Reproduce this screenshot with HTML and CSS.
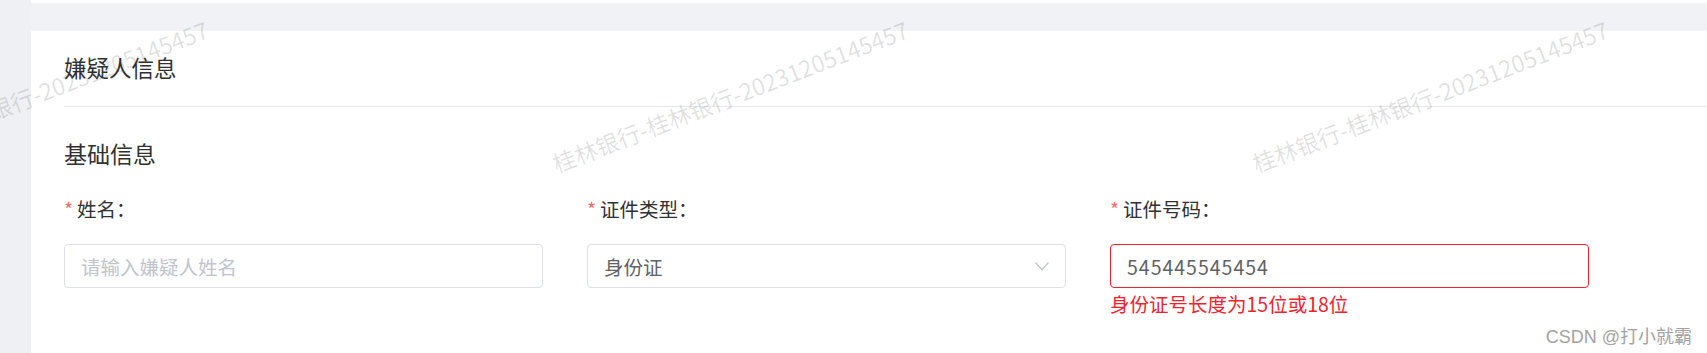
FILE: index.html
```html
<!DOCTYPE html>
<html lang="zh-CN">
<head>
<meta charset="UTF-8">
<meta name="viewport" content="width=device-width, initial-scale=1.0">
<title>嫌疑人信息</title>
<link rel="stylesheet" href="styles.css">
</head>
<body>
<div class="layout">
    <aside class="side"></aside>
    <main class="main">
        <div class="tabs-bar"></div>
        <section class="card">
            <div class="card-header">嫌疑人信息</div>
            <div class="card-body">
                <h3 class="group-title">基础信息</h3>
                <div class="form-row">
                    <div class="form-item">
                        <label class="form-label"><span class="req">*</span>姓名：</label>
                        <input class="control" type="text" placeholder="请输入嫌疑人姓名">
                    </div>
                    <div class="form-item">
                        <label class="form-label"><span class="req">*</span>证件类型：</label>
                        <div class="control select">
                            <span class="select-value">身份证</span>
                            <svg class="arrow" width="14" height="9" viewBox="0 0 14 9">
                                <polyline points="0.5,0.5 7,8 13.5,0.5" fill="none" stroke="#c0c4cc" stroke-width="1.2"/>
                            </svg>
                        </div>
                    </div>
                    <div class="form-item">
                        <label class="form-label"><span class="req">*</span>证件号码：</label>
                        <input class="control is-error value-digits" type="text" value="545445545454">
                        <div class="error-msg">身份证号长度为15位或18位</div>
                    </div>
                </div>
            </div>
        </section>
    </main>

    <!-- watermark overlay -->
    <div class="watermarks">
        <span class="wm wm-1">桂林银行-桂林银行-20231205145457</span>
        <span class="wm wm-2">桂林银行-桂林银行-20231205145457</span>
        <span class="wm wm-3">桂林银行-桂林银行-20231205145457</span>
    </div>
    <div class="csdn">CSDN @打小就霸</div>
</div>
</body>
</html>
```

FILE: styles.css
```css
body {
    margin: 0;
    font-family: "Noto Sans CJK SC", "Microsoft YaHei", sans-serif;
    background: #fff;
    color: #303133;
}
.layout {
    display: flex;
    position: relative;
    min-height: 353px;
    overflow: hidden;
}
.side {
    width: 31px;
    flex-shrink: 0;
    background: #eef0f3;
}
.main {
    flex: 1;
    min-width: 0;
    padding-top: 3px;
}
.tabs-bar {
    height: 28px;
    background: #f0f2f5;
}
.card {
    background: #fff;
}
.card-header {
    margin-left: 33px;
    height: 72px;
    padding-bottom: 3px;
    border-bottom: 1px solid #e4e7ed;
    display: flex;
    align-items: center;
    font-size: 22.5px;
    color: #303133;
}
.card-body {
    padding-left: 33px;
}
.group-title {
    margin: 31px 0 0;
    font-size: 23px;
    line-height: 30px;
    font-weight: normal;
    color: #303133;
}
.form-row {
    display: grid;
    grid-template-columns: repeat(3, 479px);
    column-gap: 44px;
    margin-top: 27px;
}
.form-label {
    display: block;
    font-size: 19.5px;
    line-height: 28px;
    color: #303133;
}
.req {
    color: #f56c6c;
    margin-right: 4px;
}
.control {
    display: flex;
    align-items: center;
    width: 100%;
    height: 44px;
    margin: 21px 0 0;
    padding: 0 16px;
    box-sizing: border-box;
    border: 1px solid #dcdfe6;
    border-radius: 4px;
    background: #fff;
    font-family: inherit;
    font-size: 19.5px;
    color: #606266;
    outline: none;
}
.control::placeholder {
    color: #c0c4cc;
}
.control.is-error {
    border-color: #f5222d;
}
.value-digits {
    letter-spacing: 1px;
}
.select {
    justify-content: space-between;
}
.arrow {
    display: block;
}
.error-msg {
    margin-top: 6px;
    font-size: 19.5px;
    line-height: 20px;
    color: #f5222d;
}
.watermarks {
    position: absolute;
    inset: 0;
    pointer-events: none;
}
.wm {
    position: absolute;
    top: 96px;
    white-space: nowrap;
    font-size: 23px;
    color: rgba(0, 0, 0, 0.12);
    transform: translate(-50%, -50%) rotate(-21deg);
}
.wm-1 { left: 30px; }
.wm-2 { left: 730px; }
.wm-3 { left: 1430px; }
.csdn {
    position: absolute;
    right: 15px;
    top: 322px;
    font-family: "Liberation Sans", "Noto Sans CJK SC", sans-serif;
    font-size: 18px;
    color: #a3a3a3;
    text-shadow: 0 0 2px #fff;
}
```
